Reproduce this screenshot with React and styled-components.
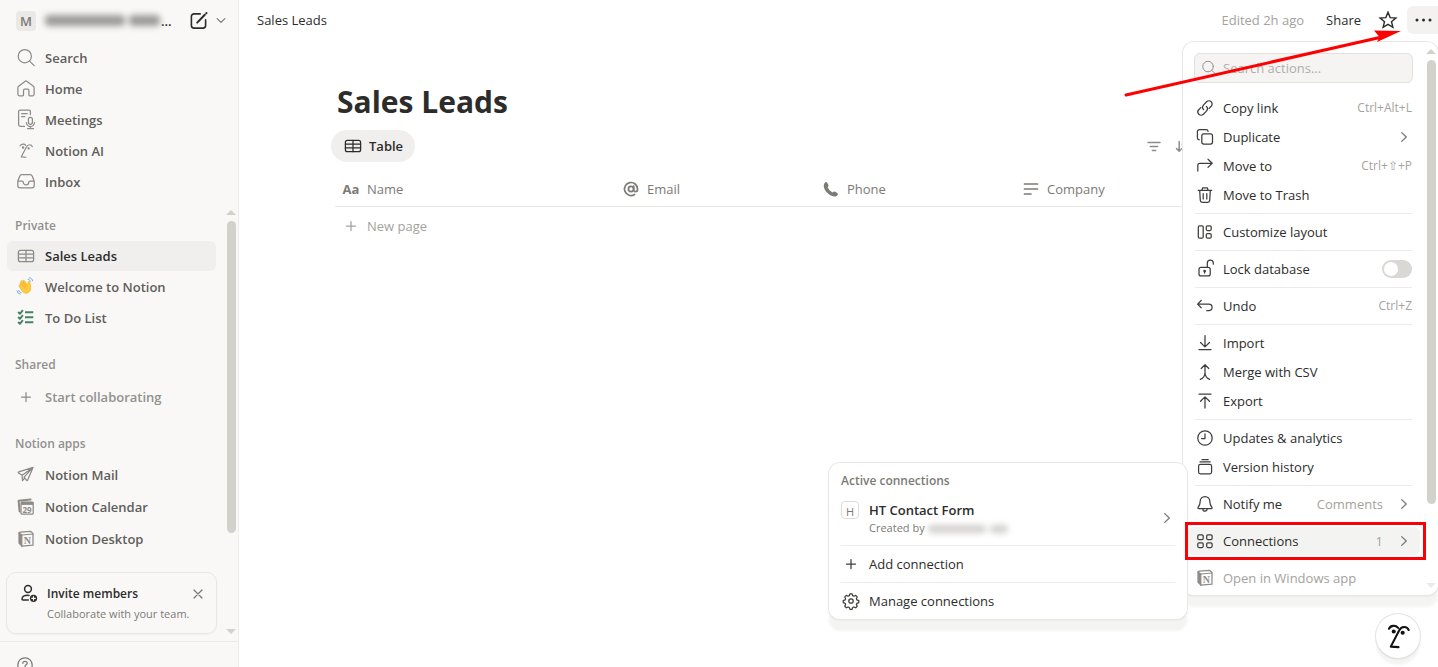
import React from 'react'
import styled, { createGlobalStyle } from 'styled-components'

const GlobalStyle = createGlobalStyle`
* {
  box-sizing: border-box;
}
body {
  margin: 0;
  background: #fff;
  color: #2c2c2b;
  font-family: "Open Sans", "Noto Sans", sans-serif;
  font-size: 13px;
  line-height: 20px;
  overflow: hidden;
}
button, input {
  font: inherit;
  color: inherit;
  border: 0;
  background: none;
  padding: 0;
  margin: 0;
}
button {
  text-align: left;
}
a {
  color: inherit;
  text-decoration: none;
}
h1, h2, p {
  margin: 0;
}
`

/* ---------- icons ---------- */

const Svg = styled.svg`
  flex: none;
  display: block;
  overflow: visible;
  fill: none;
  stroke: currentColor;
  stroke-width: ${p => p.$weight || 1.25};
  stroke-linecap: round;
  stroke-linejoin: round;
`

const Icon = ({ children, size = 20, box = '0 0 20 20', weight, color }) => (
  <Svg width={size} height={size} viewBox={box} $weight={weight} color={color} aria-hidden="true">
    {children}
  </Svg>
)

const SearchIcon = ({ size }) => (
  <Icon size={size}>
    <circle cx="8.8" cy="8.2" r="6.6" />
    <path d="M13.6 13.1l4.6 4.5" />
  </Icon>
)

const HomeIcon = () => (
  <Icon>
    <path d="M1.9 8.6c0-.6.3-1 .7-1.4l6.3-4.8a1.8 1.8 0 0 1 2.2 0l6.3 4.8c.4.4.7.8.7 1.4v6.6a1.6 1.6 0 0 1-1.6 1.6h-2.8a.8.8 0 0 1-.8-.8v-4.6a1.2 1.2 0 0 0-1.2-1.2H8.7a1.2 1.2 0 0 0-1.2 1.2V16a.8.8 0 0 1-.8.8H3.5a1.6 1.6 0 0 1-1.6-1.6z" />
  </Icon>
)

const MeetingsIcon = () => (
  <Icon>
    <path d="M8.5 16.4H4.4a1.8 1.8 0 0 1-1.8-1.8V1.8A1.8 1.8 0 0 1 4.4 0h8.2a1.8 1.8 0 0 1 1.8 1.8V4.5M5.6 3.7h5.6M5.6 6.6h3.2" />
    <rect x="12.4" y="7.3" width="4" height="7" rx="2" />
    <path d="M10.4 12.5a4 4 0 0 0 8 0M14.4 16.5v2M11.5 18.6h6" />
  </Icon>
)

const FacePaths = () => (
  <>
    <path d="M.8 4.6C2.2 1.2 7.2.8 9.6 3.7" />
    <path d="M19.8 5.8C18.4 2 12.8 1.5 10.6 6.2L2.6 21.7l7.4.5" />
    <circle cx="5.4" cy="7.2" r="1" fill="currentColor" />
    <circle cx="14" cy="8.4" r="1" fill="currentColor" />
  </>
)

const FaceIcon = ({ size = 20, weight = 1.8 }) => (
  <Icon size={size} box={size > 20 ? '0 0 20 24' : '-4 -3 28 31'} weight={weight}>
    <FacePaths />
  </Icon>
)

const InboxIcon = () => (
  <Icon>
    <path d="M1.8 9.3V13.8a2.1 2.1 0 0 0 2.1 2.1h12.2a2.1 2.1 0 0 0 2.1-2.1V9.3L16.2 4a2 2 0 0 0-1.9-1.4H5.7A2 2 0 0 0 3.8 4zM1.8 9.2h4.4c.6 0 1 .4 1.1 1a2.7 2.7 0 0 0 5.4 0c.1-.6.5-1 1.1-1h4.4" />
  </Icon>
)

const ComposeIcon = () => (
  <Icon weight={1.6}>
    <path d="M11.2 2.9H5a2.600 2.600 0 0 0-2.600 2.600V14.5A2.600 2.600 0 0 0 5 17.1h9a2.600 2.600 0 0 0 2.600-2.600V8.800" />
    <path d="M8.2 11.6l7.6-7.8M17.3 2.2l.2-.2" strokeWidth="2" />
  </Icon>
)

const TableIcon = () => (
  <Icon>
    <rect x="2.4" y="4.3" width="15.2" height="11.4" rx="2" />
    <path d="M2.4 8h15.2M2.4 11.9h15.2M10 4.3v11.4" />
  </Icon>
)

const ChecklistIcon = () => (
  <Icon weight={1.9} color="#448361">
    <path d="M9 4.2h8.3M9 9.2h8.3M9 14.2h8.3M2.2 4l1.7 1.8 3-3.6M2.2 9l1.7 1.8 3-3.6M2.2 14l1.7 1.8 3-3.6" strokeLinecap="butt" />
  </Icon>
)

const WaveIcon = () => (
  <Icon weight={0.9}>
    <path d="M4 7.2c-.6-1 .6-1.9 1.4-1l-.6-1.3c-.4-1.1 1-1.8 1.7-.8l.2.3c-.3-1.200 1-1.700 1.700-.8l3.300 4.400.3-2.700c.1-1.300 1.800-1.400 2 0l.7 4.900c.4 3.600-1.500 6-4.700 6.100-2.300 0-3.600-1.200-4.700-3.200L3.200 9.600c-.6-1 .2-1.900 1.100-1.300z" fill="#ffc83d" stroke="#f3ac2a" strokeWidth=".5" />
    <path d="M5.6 6.5l3 4M7 4.9l3 4.3" stroke="#e59a1d" strokeWidth=".6" />
    <path d="M12 2.3c1.3.2 2 .8 2.300 1.900M13.300.8c2 .3 2.900 1.200 3.400 3M2.700 13.400c.3 1.300 1 1.900 2.300 2.100M1.100 14c.4 1.900 1.300 2.800 3.200 3" stroke="#5aa7e8" />
  </Icon>
)

const PlusIcon = () => (
  <Icon>
    <path d="M10 5.5v9M5.5 10h9" />
  </Icon>
)

const MailIcon = () => (
  <Icon>
    <path d="M17 2.4L2.8 6.8c-.6.2-.7.9-.2 1.2l3.5 2.3L17 2.4l-5.3 12.7c-.2.6-.9.6-1.3.1l-2.3-3L17 2.4M6.1 10.3l.4 5.300 2.200-2.600" />
  </Icon>
)

const CalendarIcon = () => (
  <Icon>
    <path d="M3.6 14.5L2.6 3.8l12-1.3" strokeWidth="2" />
    <rect x="5" y="5" width="12.2" height="12.2" rx="1" />
    <path d="M5 6.4h12.2" strokeWidth="3" strokeLinecap="butt" />
    <text x="11.1" y="15.6" textAnchor="middle" fontSize="8" fontWeight="700" fill="currentColor" stroke="none">29</text>
  </Icon>
)

const NotionIcon = () => (
  <Icon>
    <path d="M3 4l2.8 2v11.2L3 14z" fill="currentColor" />
    <path d="M3 3.9l1.3-.8 10.2-.8L17 4.4V16.2l-11.2 1M5.8 6L17 5" />
    <text x="11.4" y="14.8" textAnchor="middle" fontSize="10" fontWeight="700" fontFamily="Liberation Serif, serif" fill="currentColor" stroke="none">N</text>
  </Icon>
)

const InviteIcon = () => (
  <Icon weight={1.5}>
    <circle cx="9" cy="5" r="3.4" />
    <path d="M10 11.4c-3.8-.8-7 .8-7 3.7 0 .6.4.9.9.9h5.4" />
    <circle cx="14.5" cy="14.3" r="3.6" fill="currentColor" stroke="none" />
    <path d="M14.5 12.5v3.6M12.7 14.3h3.6" stroke="#fff" strokeWidth="1.2" />
  </Icon>
)

const CloseIcon = () => (
  <Icon>
    <path d="M6 6l8 8M14 6l-8 8" />
  </Icon>
)

const HelpIcon = () => (
  <Icon>
    <circle cx="9" cy="10" r="7.2" />
    <path d="M6.8 8.3c.1-2.7 4.4-2.5 4.4-.1 0 1.6-2.2 1.5-2.2 3.3M9 13.6v.1" />
  </Icon>
)

const StarIcon = () => (
  <Icon weight={1.4}>
    <path d="M10 2.3l2.2 5.3 5.7.4-4.4 3.7 1.4 5.6-4.9-3-4.9 3 1.4-5.6L2.1 8l5.7-.4z" strokeLinejoin="miter" />
  </Icon>
)

const DotsIcon = () => (
  <Icon>
    <g fill="currentColor" stroke="none">
      <circle cx="4" cy="10" r="1.5" />
      <circle cx="10.5" cy="10" r="1.5" />
      <circle cx="17" cy="10" r="1.5" />
    </g>
  </Icon>
)

const FilterIcon = () => (
  <Icon color="#8e8b86" weight={1.4}>
    <path d="M4 6.5h12M6.3 10.5h7.400M8.300 14.5h3.400" />
  </Icon>
)

const SortIcon = () => (
  <Icon color="#8e8b86" weight={1.5}>
    <path d="M6.2 5.5v9.5M3.500 12.500L6.200 15.200 8.900 12.500M12 15.500V6M9.300 8.500L12 5.800 14.700 8.500" />
  </Icon>
)

const AtIcon = () => (
  <Icon weight={1.7}>
    <circle cx="10" cy="10" r="2.6" />
    <path d="M12.7 7.2v3.6a1.900 1.900 0 0 0 3.800 0V10a6.500 6.500 0 1 0-3 5.500" />
  </Icon>
)

const PhoneIcon = () => (
  <Icon>
    <path d="M3.3 4.600C4 3.300 5.400 2.400 6.200 3.800L7.400 6c.5 1-.1 1.600-.8 2.300.8 2.200 2.800 4.200 5.200 5.200.7-.8 1.400-1.300 2.300-.7l2.200 1.300c1.200.8.500 2.100-.7 2.800-3 1.700-7.400-.8-9.900-3.600C3.300 10.700 2 7 3.300 4.600z" fill="currentColor" stroke="none" />
  </Icon>
)

const TextIcon = () => (
  <Icon weight={1.7}>
    <path d="M3.5 5h13M3.5 10h13M3.5 15h6.5" />
  </Icon>
)

const ChevronRight = () => (
  <Icon weight={1.3} color="#7d7a75">
    <path d="M7.7 5.6l4.6 4.4-4.6 4.4" />
  </Icon>
)

const ChevronDown = () => (
  <Icon size={14} weight={1.7} color="#7d7a75">
    <path d="M4.5 6.500L10 12l5.500-5.500" />
  </Icon>
)

const menuIcons = {
  link: <path d="M8.6 11.600a3.200 3.200 0 0 1-.2-4.500l3.200-3.300a3.200 3.200 0 0 1 4.600 4.500l-2 2.100M11.400 8.400a3.200 3.200 0 0 1 .2 4.500l-3.200 3.300a3.200 3.200 0 0 1-4.600-4.500l2-2.100" />,
  duplicate: (
    <>
      <rect x="6.8" y="6.8" width="10.7" height="10.2" rx="2" />
      <path d="M4.3 12.8a2 2 0 0 1-1.9-2V4.600a2 2 0 0 1 2-2h6.700a2 2 0 0 1 2 1.700" />
    </>
  ),
  move: <path d="M2.8 15V9.3a2 2 0 0 1 2-2h12.400M13 3.200l4.200 4.100-4.200 4.100" />,
  trash: <path d="M3.3 5.3h13.400M7 5.200l.6-2.400h4.800l.6 2.400M4.700 5.500l.6 9.900a2 2 0 0 0 2 1.900h5.400a2 2 0 0 0 2-1.900l.6-9.900M8.200 8.500v5.500M11.800 8.500v5.500" />,
  layout: (
    <>
      <rect x="3.3" y="3.9" width="4.9" height="12.2" rx="1.2" />
      <rect x="11.3" y="3.9" width="4.9" height="4.6" rx="1.2" />
      <rect x="11.3" y="11.5" width="4.9" height="4.6" rx="1.2" />
    </>
  ),
  lock: (
    <>
      <rect x="4" y="8.3" width="11.2" height="8.6" rx="2" />
      <path d="M12.3 8V4.2a3 3 0 0 1 6 0v1M9.6 12v2" />
      <circle cx="9.6" cy="12" r=".7" fill="currentColor" />
    </>
  ),
  undo: <path d="M6.2 4.5L2.6 8.1l3.6 3.6M2.8 8.1h11a3.3 3.3 0 0 1 0 6.6h-2" />,
  import: <path d="M10 2.5v11M5.5 9.5l4.5 4.400 4.500-4.400M4 16.500h12" />,
  merge: <path d="M10 11V2.8M6.2 6.5L10 2.7l3.8 3.8M5.3 17.3c3.2-1.200 4.700-3.300 4.700-6.500 0 3.200 1.500 5.300 4.700 6.500" />,
  export: <path d="M10 17V6M5.5 10.3L10 5.9l4.500 4.400M4 3h12" />,
  clock: (
    <>
      <circle cx="10" cy="10" r="7.2" />
      <path d="M10 5.8V10.500H6.500" />
    </>
  ),
  history: (
    <>
      <rect x="3.6" y="7.4" width="13" height="9.4" rx="1.8" />
      <path d="M5 4.9h10.200M7 2.500h6.200" />
    </>
  ),
  bell: <path d="M10 2.5a4.800 4.800 0 0 0-4.800 4.800c0 3.200-1 4.700-2.100 6.100-.4.500-.1 1.100.5 1.100h12.800c.6 0 .9-.6.5-1.100-1.100-1.400-2.100-2.900-2.100-6.100A4.800 4.800 0 0 0 10 2.500zM7.800 14.900a2.200 2.200 0 0 0 4.400 0" />,
  grid: (
    <>
      <rect x="2.8" y="3.9" width="5.4" height="4.7" rx="1.2" />
      <rect x="11.7" y="3.9" width="5.4" height="4.7" rx="1.2" />
      <rect x="2.8" y="11.8" width="5.4" height="4.7" rx="1.2" />
      <rect x="11.7" y="11.8" width="5.4" height="4.7" rx="1.2" />
    </>
  ),
  gear: (
    <>
      <circle cx="10" cy="10" r="2.2" />
      <path d="M9 2.8h2l.7 1.9 1.2.5 1.8-.8 1.5 1.5-.8 1.8.5 1.2 1.9.7v2l-1.900.7-.5 1.200.8 1.800-1.500 1.500-1.800-.8-1.200.5-.7 1.900H9l-.7-1.900-1.200-.5-1.800.8-1.500-1.500.8-1.800-.5-1.200-1.900-.7v-2l1.900-.7.5-1.200-.8-1.800 1.500-1.500 1.800.8 1.200-.5z" />
    </>
  ),
}

/* ---------- shared parts ---------- */

const Track = styled.div`
  flex: none;
  width: 10px;
  display: flex;
  flex-direction: column;
  align-items: center;
  gap: 6px;
`

const Thumb = styled.div`
  width: 9px;
  flex: 0 0 ${p => p.$length};
  border-radius: 5px;
  background: #d3d1cb;
`

const Caret = styled.span`
  width: 0;
  height: 0;
  margin-top: ${p => (p.$down ? 'auto' : '0')};
  border: 5px solid transparent;
  border-width: ${p => (p.$down ? '5px 5px 0' : '0 5px 5px')};
  border-color: ${p => (p.$faint ? '#ecebe9' : '#d3d1cb')} transparent;
`

const ScrollTrack = ({ length, faint, className }) => (
  <Track className={className} aria-hidden="true">
    <Caret />
    <Thumb $length={length} />
    <Caret $down $faint={faint} />
  </Track>
)

const Redacted = styled.span`
  display: inline-flex;
  gap: 4px;
  height: ${p => p.$height};
  filter: blur(3px);
  vertical-align: middle;

  i {
    border-radius: 4px;
    background: ${p => p.$tone};
  }
  i:first-child {
    width: ${p => p.$words[0]};
  }
  i:last-child {
    width: ${p => p.$words[1]};
  }
`

/* ---------- sidebar ---------- */

const Page = styled.div`
  position: relative;
  display: flex;
  height: 100vh;
  overflow: hidden;
`

const Sidebar = styled.aside`
  flex: none;
  width: 239px;
  display: flex;
  flex-direction: column;
  background: #f9f8f7;
  border-right: 1px solid #eeedeb;
  color: #5f5e5b;
  font-weight: 600;

  > * {
    flex: none;
  }
`

const Workspace = styled.div`
  display: flex;
  align-items: center;
  gap: 5px;
  height: 43px;
  padding: 0 10px 2px 16px;
`

const Avatar = styled.span`
  display: grid;
  place-items: center;
  width: 20px;
  height: 20px;
  border-radius: 4px;
  background: #eae9e6;
  color: #7d7a75;
`

const WorkspaceName = styled.button`
  display: flex;
  align-items: center;
  gap: 1px;
  flex: 1;
  padding-left: 4px;
  color: #2c2c2b;
`

const IconButton = styled.button`
  display: grid;
  place-items: center;
  color: ${p => p.$color || '#2c2c2b'};
`

const NavList = styled.nav`
  display: flex;
  flex-direction: column;
  gap: ${p => p.$gap || '1px'};
  padding: ${p => p.$top || '0'} 0 0 7px;
`

const NavItem = styled.a`
  display: flex;
  align-items: center;
  gap: 9px;
  width: 209px;
  height: 30px;
  padding: 0 9px;
  border-radius: 6px;
  background: ${p => (p.$active ? '#f0efed' : 'transparent')};
  color: ${p => (p.$active ? '#2c2c2b' : p.$muted ? '#91918e' : '#5f5e5b')};

  svg {
    color: ${p => p.$tint || '#8e8b86'};
  }
`

const SidebarScroll = styled.div`
  display: flex;
  justify-content: space-between;
  margin-top: 13px;
  padding-right: 2px;
`

const SectionTitle = styled.h2`
  height: 30px;
  margin-top: ${p => (p.$first ? '1px' : '17px')};
  padding: 5px 15px;
  font-size: 12px;
  font-weight: 600;
  color: #91918e;
`

const InviteCard = styled.section`
  display: flex;
  width: 211px;
  margin: 18px 0 0 6px;
  padding: 11px 8px 9px 12px;
  gap: 8px;
  border: 1px solid #e8e7e4;
  border-radius: 10px;
  box-shadow: 0 1px 2px rgba(0, 0, 0, 0.04);
  color: #2c2c2b;

  h2 {
    font-size: 12px;
    font-weight: 600;
  }
  p {
    font-size: 11px;
    font-weight: 400;
    color: #7d7a75;
    white-space: nowrap;
  }
  div {
    flex: 1;
    min-width: 0;
  }
  button {
    align-self: flex-start;
    width: 20px;
    height: 16px;
    margin-left: -20px;
  }
`

const SidebarFooter = styled.div`
  margin-top: 7px;
  padding: 13px 16px;
  border-top: 1px solid #eae9e6;
`

const mainLinks = [
  ['Search', <SearchIcon />],
  ['Home', <HomeIcon />],
  ['Meetings', <MeetingsIcon />],
  ['Notion AI', <FaceIcon />],
  ['Inbox', <InboxIcon />],
]

const SideNav = () => (
  <Sidebar>
    <Workspace>
      <Avatar>M</Avatar>
      <WorkspaceName aria-label="Switch workspace">
        <Redacted $height="11px" $tone="#9b9a98" $words={['80px', '31px']}><i /><i /></Redacted>
        ...
      </WorkspaceName>
      <IconButton aria-label="New page"><ComposeIcon /></IconButton>
      <IconButton aria-label="More"><ChevronDown /></IconButton>
    </Workspace>
    <NavList>
      {mainLinks.map(([name, icon]) => (
        <NavItem key={name} href="#">{icon}{name}</NavItem>
      ))}
    </NavList>
    <SidebarScroll>
      <div>
        <SectionTitle $first>Private</SectionTitle>
        <NavList>
          <NavItem href="#" $active><TableIcon />Sales Leads</NavItem>
          <NavItem href="#"><WaveIcon />Welcome to Notion</NavItem>
          <NavItem href="#" $tint="#448361"><ChecklistIcon />To Do List</NavItem>
        </NavList>
        <SectionTitle>Shared</SectionTitle>
        <NavList $top="2px">
          <NavItem href="#" $muted><PlusIcon />Start collaborating</NavItem>
        </NavList>
        <SectionTitle>Notion apps</SectionTitle>
        <NavList $top="1px" $gap="2px">
          <NavItem href="#"><MailIcon />Notion Mail</NavItem>
          <NavItem href="#"><CalendarIcon />Notion Calendar</NavItem>
          <NavItem href="#"><NotionIcon />Notion Desktop</NavItem>
        </NavList>
        <InviteCard>
          <InviteIcon />
          <div>
            <h2>Invite members</h2>
            <p>Collaborate with your team.</p>
          </div>
          <IconButton aria-label="Dismiss" $color="#7d7a75"><CloseIcon /></IconButton>
        </InviteCard>
      </div>
      <ScrollTrack length="312px" />
    </SidebarScroll>
    <SidebarFooter>
      <IconButton aria-label="Help" $color="#7d7a75"><HelpIcon /></IconButton>
    </SidebarFooter>
  </Sidebar>
)

/* ---------- main area ---------- */

const Main = styled.main`
  flex: 1;
  min-width: 0;
`

const TopBar = styled.header`
  display: flex;
  align-items: center;
  height: 40px;
  padding-left: 18px;
`

const Edited = styled.span`
  margin-left: auto;
  margin-right: 22px;
  color: #a5a29d;
`

const TopActions = styled.div`
  display: flex;
  align-items: center;
  gap: 17px;
`

const MoreButton = styled(IconButton)`
  width: 31px;
  height: 28px;
  margin-left: -8px;
  border-radius: 6px 0 0 6px;
  background: #f3f2f1;
`

const Database = styled.section`
  padding: 40px 0 0 96px;
`

const Title = styled.h1`
  padding-left: 2px;
  font-size: 30px;
  line-height: 44px;
  font-weight: 700;
`

const ViewBar = styled.div`
  display: flex;
  align-items: center;
  justify-content: space-between;
  margin-top: 6px;
  margin-left: -4px;
  padding-right: 245px;
`

const ViewTab = styled.button`
  display: flex;
  align-items: center;
  gap: 6px;
  height: 32px;
  padding: 0 12px;
  border-radius: 16px;
  background: #f0efed;
  font-weight: 600;
`

const ViewTools = styled.div`
  display: flex;
  gap: 9px;
`

const Table = styled.table`
  width: 100%;
  margin-top: 10px;
  border-collapse: collapse;
  table-layout: fixed;
  color: #7d7a75;

  th {
    height: 34px;
    padding: 0 6px;
    border-bottom: 1px solid #e9e8e6;
    font-weight: 400;
    text-align: left;
  }
  td {
    height: 39px;
    padding: 0 6px;
  }
`

const Cell = styled.div`
  display: flex;
  align-items: center;
  gap: 6px;
`

const TypeLetters = styled.span`
  width: 20px;
  text-align: center;
  font-weight: 700;
`

const NewPage = styled.button`
  display: flex;
  align-items: center;
  gap: 6px;
  color: #a5a29d;
`

/* ---------- floating menus ---------- */

const Floating = styled.div`
  position: absolute;
  border-radius: 11px;
  background: #fff;
  box-shadow: 0 0 0 1px #e9e8e6, 0 1px 2px rgba(0, 0, 0, 0.12), 0 12px 3px 0 #f4f4f3;
`

const ActionsMenu = styled(Floating)`
  top: 42px;
  right: 0;
  width: 255px;
  display: flex;
  justify-content: space-between;
  padding: 0 2px 3px 4px;
`

const MenuTrack = styled(ScrollTrack)`
  padding: 7px 0 4px;
`

const MenuBody = styled.div`
  width: 233px;
  padding-top: 11px;
`

const SearchBox = styled.label`
  display: flex;
  align-items: center;
  gap: 6px;
  height: 30px;
  margin: 0 7px 7px;
  padding: 0 6px;
  border: 1px solid #e2e1de;
  border-radius: 6px;
  background: #f5f4f3;
  color: #91918e;

  input {
    flex: 1;
    min-width: 0;
    outline: none;
  }
  input::placeholder {
    color: #b0aeaa;
    opacity: 1;
  }
`

const Group = styled.div`
  display: flex;
  flex-direction: column;
  gap: 1px;
  padding: 4px 0;

  & + & {
    margin-top: 1px;
  }
  & + &::before {
    content: '';
    height: 1px;
    margin: -5px 8px 3px;
    background: #ecebe9;
  }
  &:last-child {
    padding-bottom: 0;
  }
`

const Row = styled.button`
  position: relative;
  display: flex;
  align-items: center;
  gap: 8px;
  height: 28px;
  padding: 0 8px;
  border-radius: 6px;
  background: ${p => (p.$active ? '#f3f3f1' : 'transparent')};
  color: ${p => (p.$faded ? '#a5a29d' : '#2c2c2b')};

  svg {
    color: ${p => (p.$faded ? '#8e8b86' : '#3f3e3c')};
  }
`

const Callout = styled.span`
  position: absolute;
  z-index: 2;
  inset: -5px -6px -5px -2px;
  border: 3px solid #fb0007;
`

const Hint = styled.span`
  display: flex;
  align-items: center;
  gap: 11px;
  margin-left: auto;
  font-size: ${p => (p.$small ? '12px' : '13px')};
  color: #a5a29d;

  svg {
    color: #7d7a75;
    margin-right: -2px;
  }
`

const Switch = styled.input`
  appearance: none;
  width: 30px;
  height: 18px;
  margin-left: auto;
  padding: 2px;
  border-radius: 9px;
  background: #d9d8d5;

  &::before {
    content: '';
    display: block;
    width: 14px;
    height: 14px;
    border-radius: 50%;
    background: #fff;
  }
`

const groups = [
  [
    { icon: 'link', name: 'Copy link', keys: 'Ctrl+Alt+L' },
    { icon: 'duplicate', name: 'Duplicate', more: true },
    { icon: 'move', name: 'Move to', keys: 'Ctrl+⇧+P' },
    { icon: 'trash', name: 'Move to Trash' },
  ],
  [{ icon: 'layout', name: 'Customize layout' }],
  [{ icon: 'lock', name: 'Lock database', toggle: true }],
  [{ icon: 'undo', name: 'Undo', keys: 'Ctrl+Z' }],
  [
    { icon: 'import', name: 'Import' },
    { icon: 'merge', name: 'Merge with CSV' },
    { icon: 'export', name: 'Export' },
  ],
  [
    { icon: 'clock', name: 'Updates & analytics' },
    { icon: 'history', name: 'Version history' },
  ],
  [{ icon: 'bell', name: 'Notify me', value: 'Comments', more: true }],
  [{ icon: 'grid', name: 'Connections', value: '1', more: true, active: true }],
  [{ icon: 'notion', name: 'Open in Windows app', faded: true }],
]

const MenuRow = ({ item }) => (
  <Row
    as={item.toggle ? 'label' : 'button'}
    $active={item.active}
    $faded={item.faded}
  >
    {item.icon === 'notion' ? <NotionIcon /> : <Icon>{menuIcons[item.icon]}</Icon>}
    {item.name}
    {item.toggle && <Switch type="checkbox" role="switch" />}
    {item.keys && <Hint $small>{item.keys}</Hint>}
    {item.more && <Hint>{item.value}<ChevronRight /></Hint>}
    {item.active && <Callout />}
  </Row>
)

const ConnectionsMenu = styled(Floating)`
  top: 463px;
  right: 251px;
  width: 358px;
  padding: 8px 4px 4px;

  h2 {
    padding: 0 8px;
    font-size: 12px;
    font-weight: 600;
    color: #7d7a75;
  }
`

const Connection = styled.button`
  display: flex;
  align-items: center;
  height: 46px;
  padding: 0 8px;
  gap: 10px;

  strong {
    display: block;
    font-weight: 600;
  }
  small {
    display: block;
    font-size: 11px;
    line-height: 16px;
    color: #7d7a75;
  }
  > svg:last-child {
    margin-left: auto;
    margin-right: -2px;
  }
`

const Letter = styled.span`
  align-self: flex-start;
  display: grid;
  place-items: center;
  width: 18px;
  height: 18px;
  margin-top: 6px;
  border: 1px solid #dedddb;
  border-radius: 4px;
  font-size: 11px;
  color: #7d7a75;
`

const AiButton = styled.button`
  position: absolute;
  right: 18px;
  bottom: 9px;
  display: grid;
  place-items: center;
  width: 44px;
  height: 44px;
  border-radius: 50%;
  background: #fff;
  color: #111;
  box-shadow: 0 0 0 1px #e4e3e1, 0 1px 2px rgba(0, 0, 0, 0.15), 0 7px 3px 0 #f4f4f3;
`

const Pointer = styled.svg`
  position: absolute;
  top: 25px;
  right: 32px;
`

export default function App() {
  return (
    <Page>
      <GlobalStyle />
      <SideNav />
      <Main>
        <TopBar>
          <a href="#">Sales Leads</a>
          <Edited>Edited 2h ago</Edited>
          <TopActions>
            <button>Share</button>
            <IconButton aria-label="Favorite"><StarIcon /></IconButton>
            <MoreButton aria-label="Actions"><DotsIcon /></MoreButton>
          </TopActions>
        </TopBar>
        <Database>
          <Title>Sales Leads</Title>
          <ViewBar>
            <ViewTab><TableIcon />Table</ViewTab>
            <ViewTools>
              <IconButton aria-label="Filter"><FilterIcon /></IconButton>
              <IconButton aria-label="Sort"><SortIcon /></IconButton>
            </ViewTools>
          </ViewBar>
          <Table>
            <colgroup>
              <col width="280" />
              <col width="200" />
              <col width="200" />
              <col />
            </colgroup>
            <thead>
              <tr>
                <th><Cell><TypeLetters>Aa</TypeLetters>Name</Cell></th>
                <th><Cell><AtIcon />Email</Cell></th>
                <th><Cell><PhoneIcon />Phone</Cell></th>
                <th><Cell><TextIcon />Company</Cell></th>
              </tr>
            </thead>
            <tbody>
              <tr>
                <td colSpan="4"><NewPage><PlusIcon />New page</NewPage></td>
              </tr>
            </tbody>
          </Table>
        </Database>
      </Main>

      <ActionsMenu>
        <MenuBody>
          <SearchBox>
            <SearchIcon size={16} />
            <input aria-label="Search actions" placeholder="Search actions..." />
          </SearchBox>
          {groups.map(items => (
            <Group key={items[0].name}>
              {items.map(item => <MenuRow key={item.name} item={item} />)}
            </Group>
          ))}
        </MenuBody>
        <MenuTrack length="444px" faint />
      </ActionsMenu>

      <ConnectionsMenu>
        <h2>Active connections</h2>
        <Group>
          <Connection>
            <Letter>H</Letter>
            <span>
              <strong>HT Contact Form</strong>
              <small>
                Created by <Redacted $height="8px" $tone="#d0cfcd" $words={['58px', '18px']}><i /><i /></Redacted>
              </small>
            </span>
            <ChevronRight />
          </Connection>
        </Group>
        <Group>
          <Row><PlusIcon />Add connection</Row>
        </Group>
        <Group>
          <Row><Icon>{menuIcons.gear}</Icon>Manage connections</Row>
        </Group>
      </ConnectionsMenu>

      <AiButton aria-label="Notion AI"><FaceIcon size={25} weight={2} /></AiButton>

      <Pointer width="282" height="74" viewBox="0 0 282 74" aria-hidden="true">
        <path d="M2 70L258 12" stroke="#fe0000" strokeWidth="3" strokeLinecap="round" />
        <path d="M277 6L250 5.5l5.500 6.500-2.500 5z" fill="#fe0000" />
      </Pointer>
    </Page>
  )
}
